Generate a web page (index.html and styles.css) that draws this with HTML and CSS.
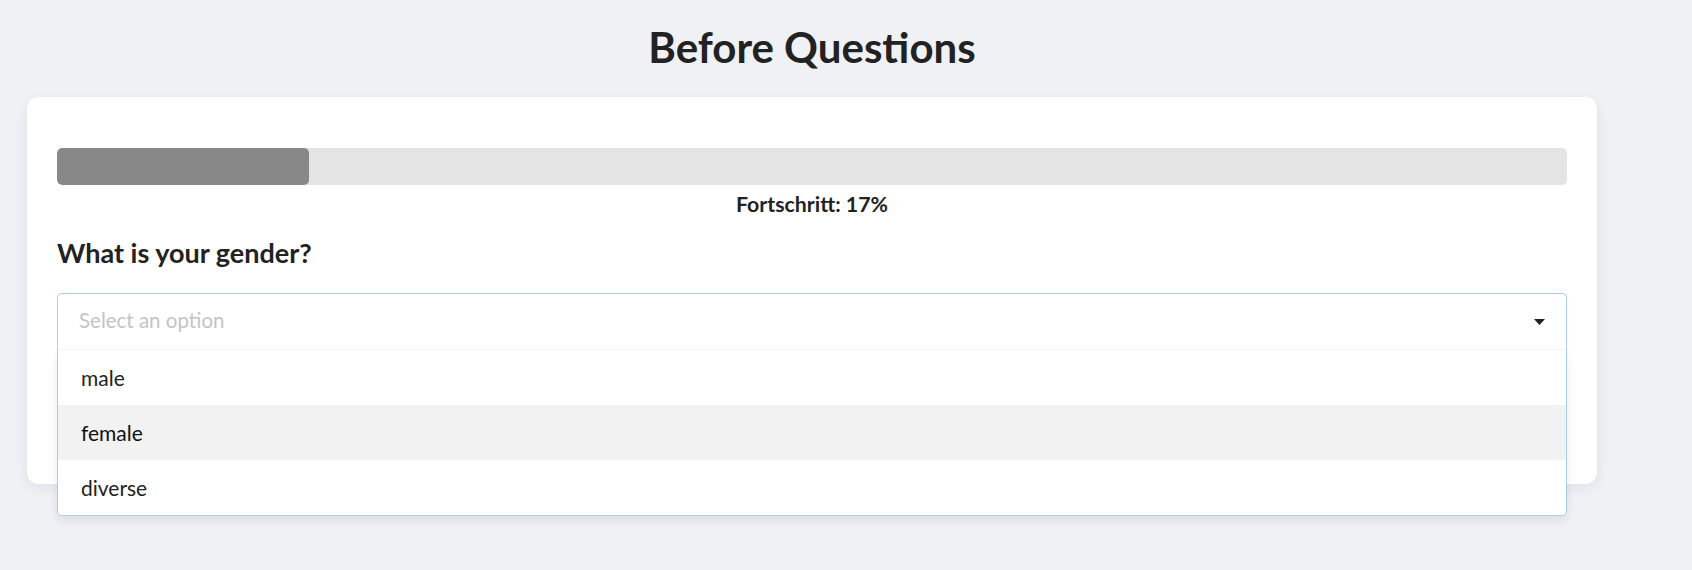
FILE: index.html
```html
<!DOCTYPE html>
<html lang="en">
<head>
<meta charset="utf-8">
<title>Before Questions</title>
<link rel="stylesheet" href="styles.css">
</head>
<body>
<main class="page">
  <h1 class="page-title">Before Questions</h1>
  <section class="card">
    <div class="progress">
      <div class="progress-fill" style="width: 16.67%"></div>
    </div>
    <p class="progress-label">Fortschritt: 17%</p>
    <h2 class="question">What is your gender?</h2>
    <div class="select">
      <div class="select-control">
        <span class="select-placeholder">Select an option</span>
        <svg class="select-caret" width="11" height="6" viewBox="0 0 11 6"><path d="M0 0H11L5.5 6Z" fill="#222"/></svg>
      </div>
      <ul class="select-menu">
        <li class="select-option">male</li>
        <li class="select-option is-hover">female</li>
        <li class="select-option">diverse</li>
      </ul>
    </div>
  </section>
</main>
</body>
</html>
```

FILE: styles.css
```css
* { box-sizing: border-box; }
html, body { margin: 0; padding: 0; }
html { min-height: 100%; }
body {
  min-height: 100vh;
  background: #f0f1f5;
  font-family: "Lato", "Noto Sans", sans-serif;
  color: #222;
}
.page {
  width: 1570px;
  margin-left: 27px;
  padding-top: 23px;
  padding-bottom: 60px;
}
.page-title {
  margin: 0 0 26px;
  font-size: 42px;
  line-height: 48px;
  font-weight: 700;
  text-align: center;
  color: #222;
}
.card {
  background: #fff;
  border-radius: 12px;
  box-shadow: 0 4px 14px rgba(20, 30, 60, 0.07);
  padding: 51px 30px 30px;
}
.progress {
  height: 37px;
  background: #e4e4e4;
  border-radius: 5px;
  overflow: hidden;
}
.progress-fill {
  height: 100%;
  background: #888888;
  border-radius: 5px;
}
.progress-label {
  margin: 7px 0 0;
  font-size: 21.3px;
  line-height: 24px;
  font-weight: 700;
  text-align: center;
  color: #222;
}
.question {
  margin: 22px 0 0;
  font-size: 27px;
  line-height: 29px;
  font-weight: 700;
  color: #222;
}
.select {
  position: relative;
  margin-top: 26px;
  margin-bottom: 105px;
}
.select-control {
  height: 56px;
  border: 1px solid #a8cfe2;
  border-bottom: none;
  border-radius: 5px 5px 0 0;
  display: flex;
  align-items: center;
  justify-content: space-between;
  padding: 0 21px;
  background: #fff;
}
.select-placeholder {
  font-size: 20.5px;
  color: #c4c4c4;
  position: relative;
  top: -2px;
}
.select-caret { display: block; }
.select-menu {
  position: absolute;
  left: 0;
  right: 0;
  top: 56px;
  margin: 0;
  padding: 0;
  list-style: none;
  background: #fff;
  border: 1px solid #a8cfe2;
  border-top: 1px solid #f3f3f3;
  border-radius: 0 0 5px 5px;
  box-shadow: 0 5px 10px rgba(20, 30, 60, 0.08);
  z-index: 2;
}
.select-option {
  height: 55px;
  line-height: 55px;
  padding-left: 23px;
  font-size: 21px;
  color: #222;
}
.select-option.is-hover {
  background: #f2f2f2;
  color: #111;
}
```
